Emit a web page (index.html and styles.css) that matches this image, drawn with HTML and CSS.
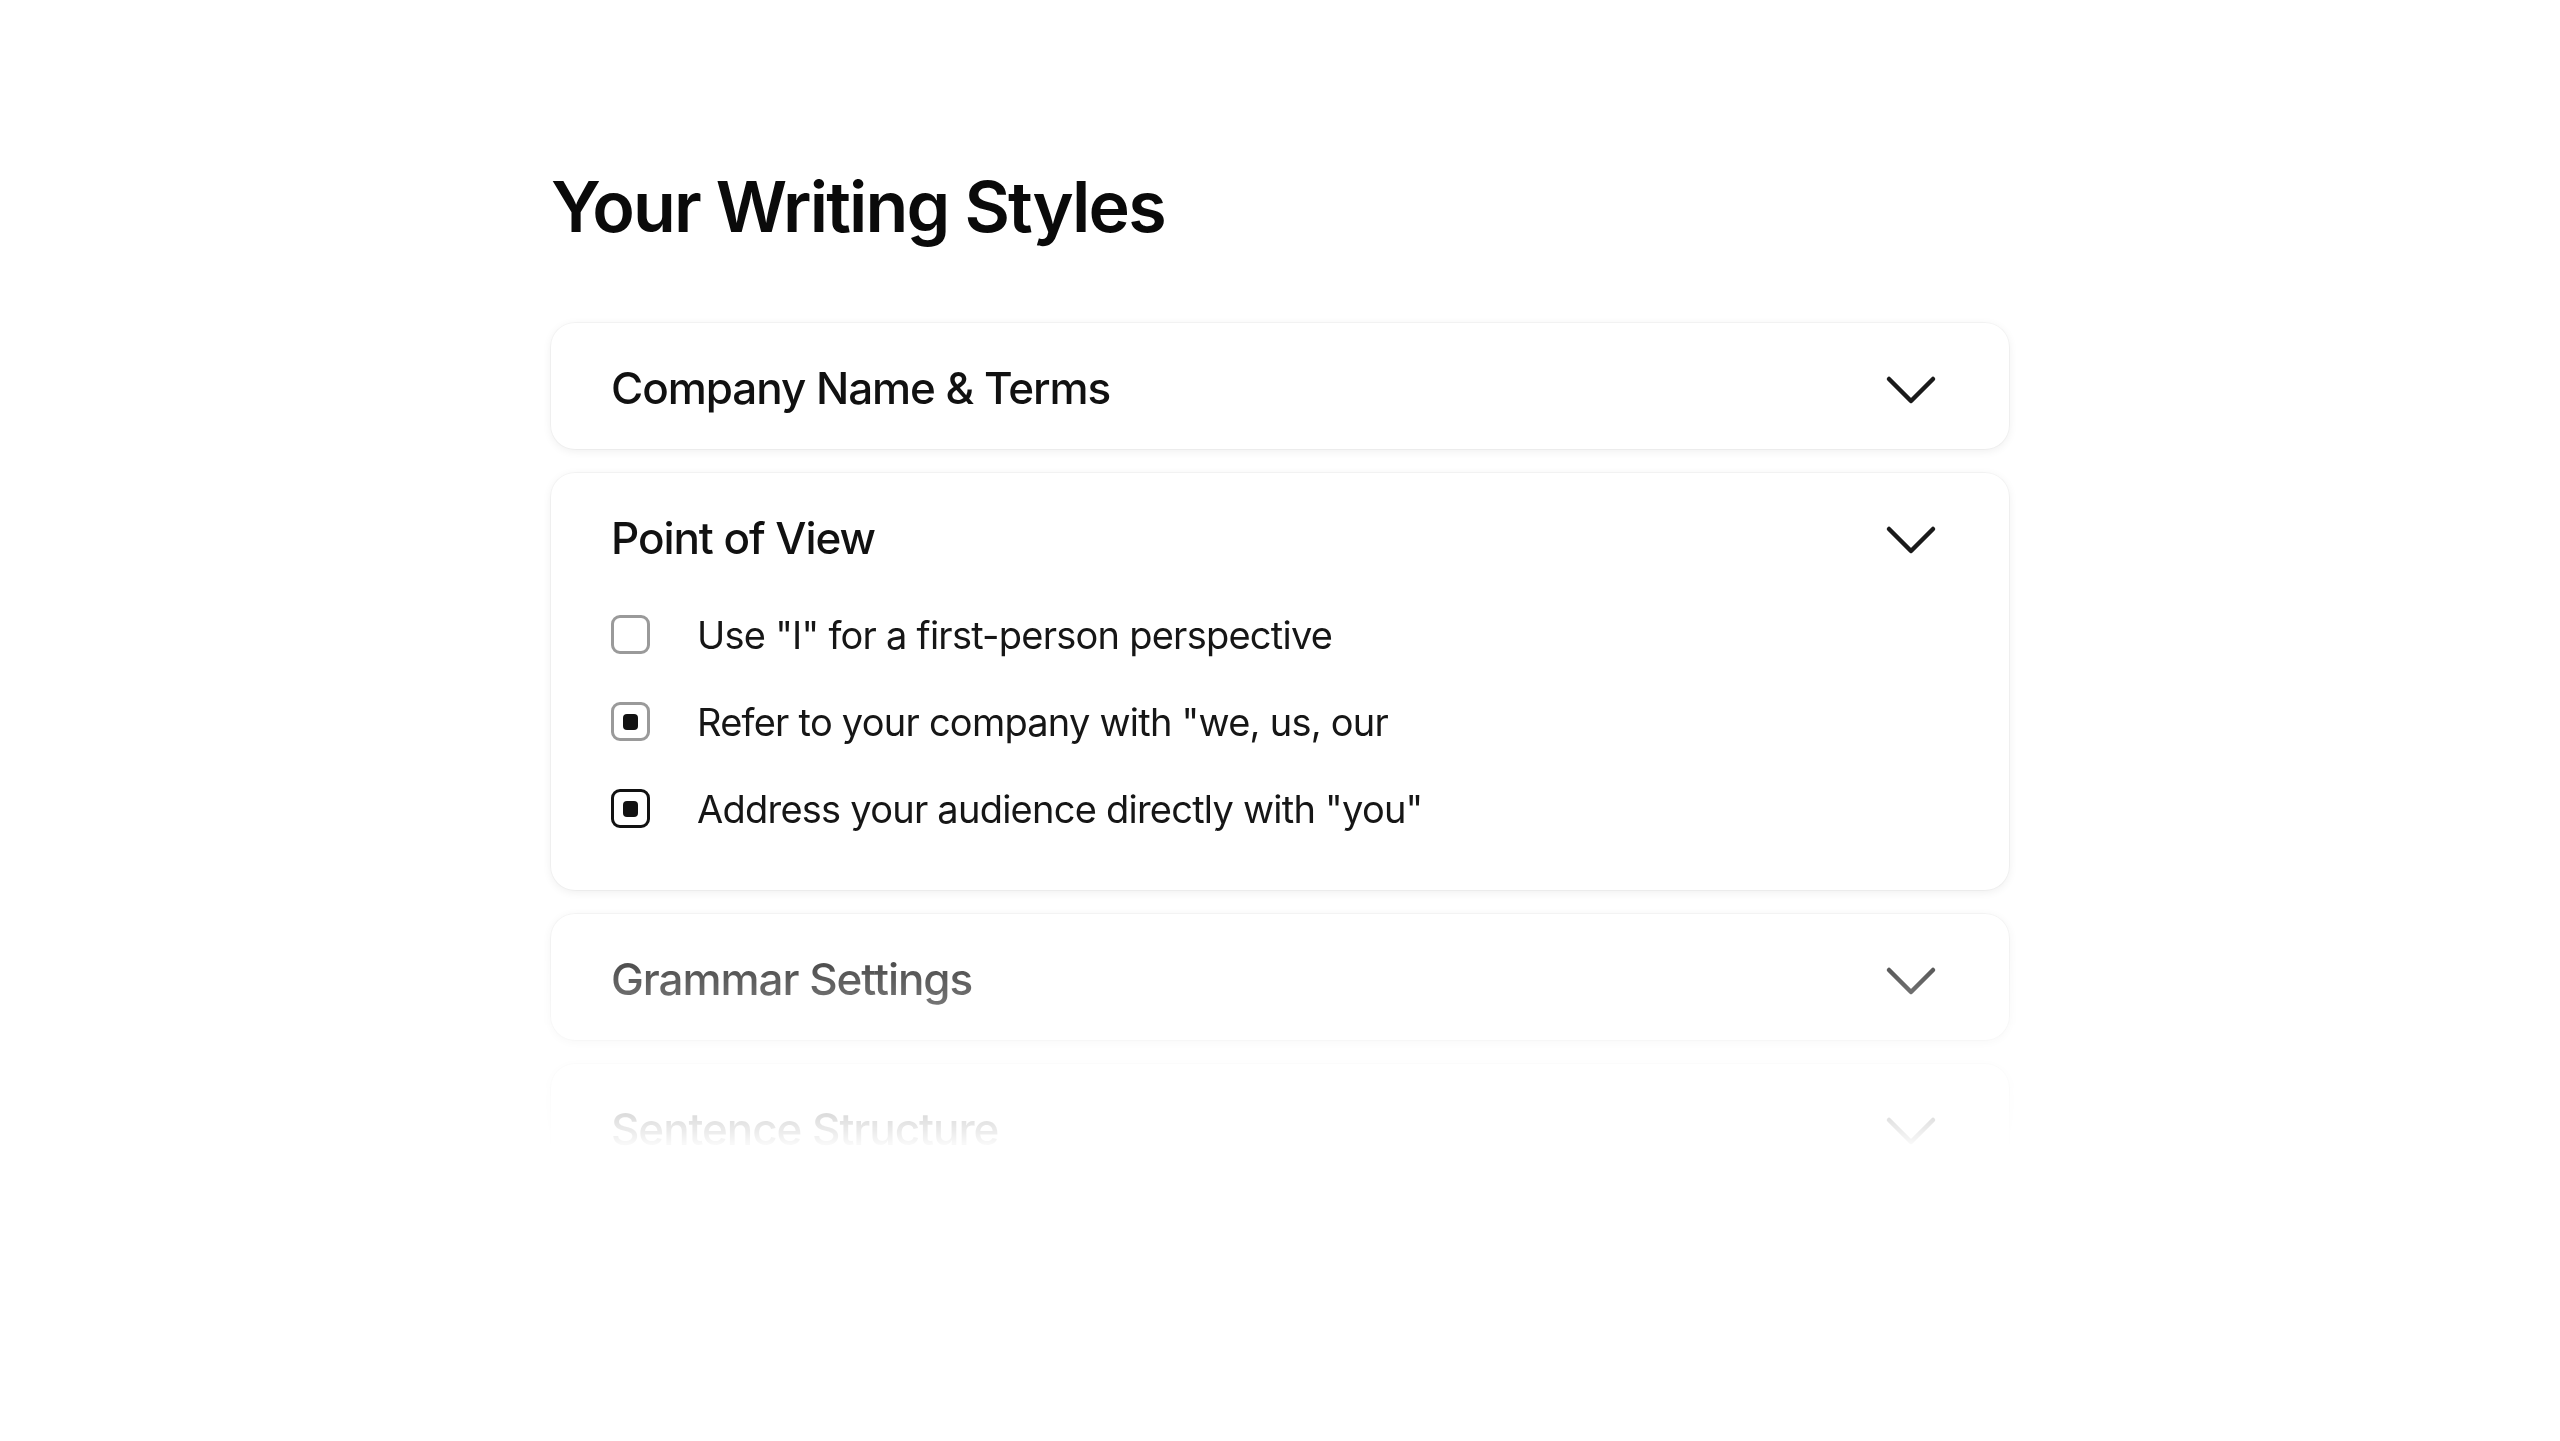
FILE: index.html
```html
<!DOCTYPE html>
<html lang="en">
<head>
<meta charset="utf-8">
<title>Your Writing Styles</title>
<link rel="stylesheet" href="styles.css">
</head>
<body>
<main class="page">
  <h1 class="title">Your Writing Styles</h1>
  <div class="list">
    <section class="card">
      <div class="card-head">
        <span class="card-title">Company Name &amp; Terms</span>
        <svg class="chev" viewBox="0 0 52 30" aria-hidden="true"><path d="M4 4 L26 26 L48 4"/></svg>
      </div>
    </section>
    <section class="card card-open">
      <div class="card-head">
        <span class="card-title">Point of View</span>
        <svg class="chev" viewBox="0 0 52 30" aria-hidden="true"><path d="M4 4 L26 26 L48 4"/></svg>
      </div>
      <ul class="options">
        <li class="option"><span class="box"></span><span class="option-text">Use "I" for a first-person perspective</span></li>
        <li class="option"><span class="box box-partial"><span class="dot"></span></span><span class="option-text">Refer to your company with "we, us, our</span></li>
        <li class="option"><span class="box box-checked"><span class="dot"></span></span><span class="option-text">Address your audience directly with "you"</span></li>
      </ul>
    </section>
    <section class="card">
      <div class="card-head">
        <span class="card-title">Grammar Settings</span>
        <svg class="chev" viewBox="0 0 52 30" aria-hidden="true"><path d="M4 4 L26 26 L48 4"/></svg>
      </div>
    </section>
    <section class="card">
      <div class="card-head">
        <span class="card-title">Sentence Structure</span>
        <svg class="chev" viewBox="0 0 52 30" aria-hidden="true"><path d="M4 4 L26 26 L48 4"/></svg>
      </div>
    </section>
  </div>
</main>
</body>
</html>
```
FILE: styles.css
```css
* { box-sizing: border-box; }
html, body { margin: 0; padding: 0; background: #ffffff; }
body {
  font-family: "Inter", "Noto Sans", "Liberation Sans", sans-serif;
  color: #111111;
}
.page {
  width: 1458px;
  margin: 0 auto;
  padding-top: 159px;
}
.title {
  margin: 0;
  font-size: 70px;
  line-height: 96px;
  font-weight: 600;
  letter-spacing: -0.026em;
  color: #0a0a0a;
}
.list {
  margin: 43px -20px 0;
  padding: 25px 20px 0;
  height: 853px;
  overflow: hidden;
  display: flex;
  flex-direction: column;
  gap: 24px;
  -webkit-mask-image: linear-gradient(to bottom, #000 0, #000 600px, transparent 853px);
  mask-image: linear-gradient(to bottom, #000 0, #000 600px, transparent 853px);
}
.card {
  flex: none;
  background: #fff;
  border-radius: 24px;
  box-shadow: 0 0 0 1px rgba(0,0,0,0.035), 0 2px 10px rgba(0,0,0,0.07);
}
.card-head {
  display: flex;
  align-items: center;
  justify-content: space-between;
  padding: 42px 72px 38px 60px;
  height: 126px;
}
.card-open .card-head { height: 116px; padding-bottom: 28px; }
.card-title {
  font-size: 44px;
  line-height: 46px;
  font-weight: 500;
  letter-spacing: -0.024em;
  color: #111;
}
.chev {
  width: 52px;
  height: 30px;
  margin-top: 4px;
  fill: none;
  stroke: #1a1a1a;
  stroke-width: 4.5;
  stroke-linecap: round;
  stroke-linejoin: round;
}
.options {
  list-style: none;
  margin: 0;
  padding: 2px 60px 38px 60px;
}
.option {
  display: flex;
  align-items: center;
  gap: 47px;
  height: 87px;
}
.box {
  flex: none;
  width: 39px;
  height: 39px;
  border: 3px solid #9a9a9a;
  border-radius: 9px;
  display: flex;
  align-items: center;
  justify-content: center;
}
.box-checked { border-color: #111; }
.dot {
  width: 15px;
  height: 16px;
  border-radius: 4px;
  background: #111;
}
.option-text {
  font-size: 38px;
  line-height: 46px;
  font-weight: 400;
  letter-spacing: -0.02em;
  color: #161616;
}
```
